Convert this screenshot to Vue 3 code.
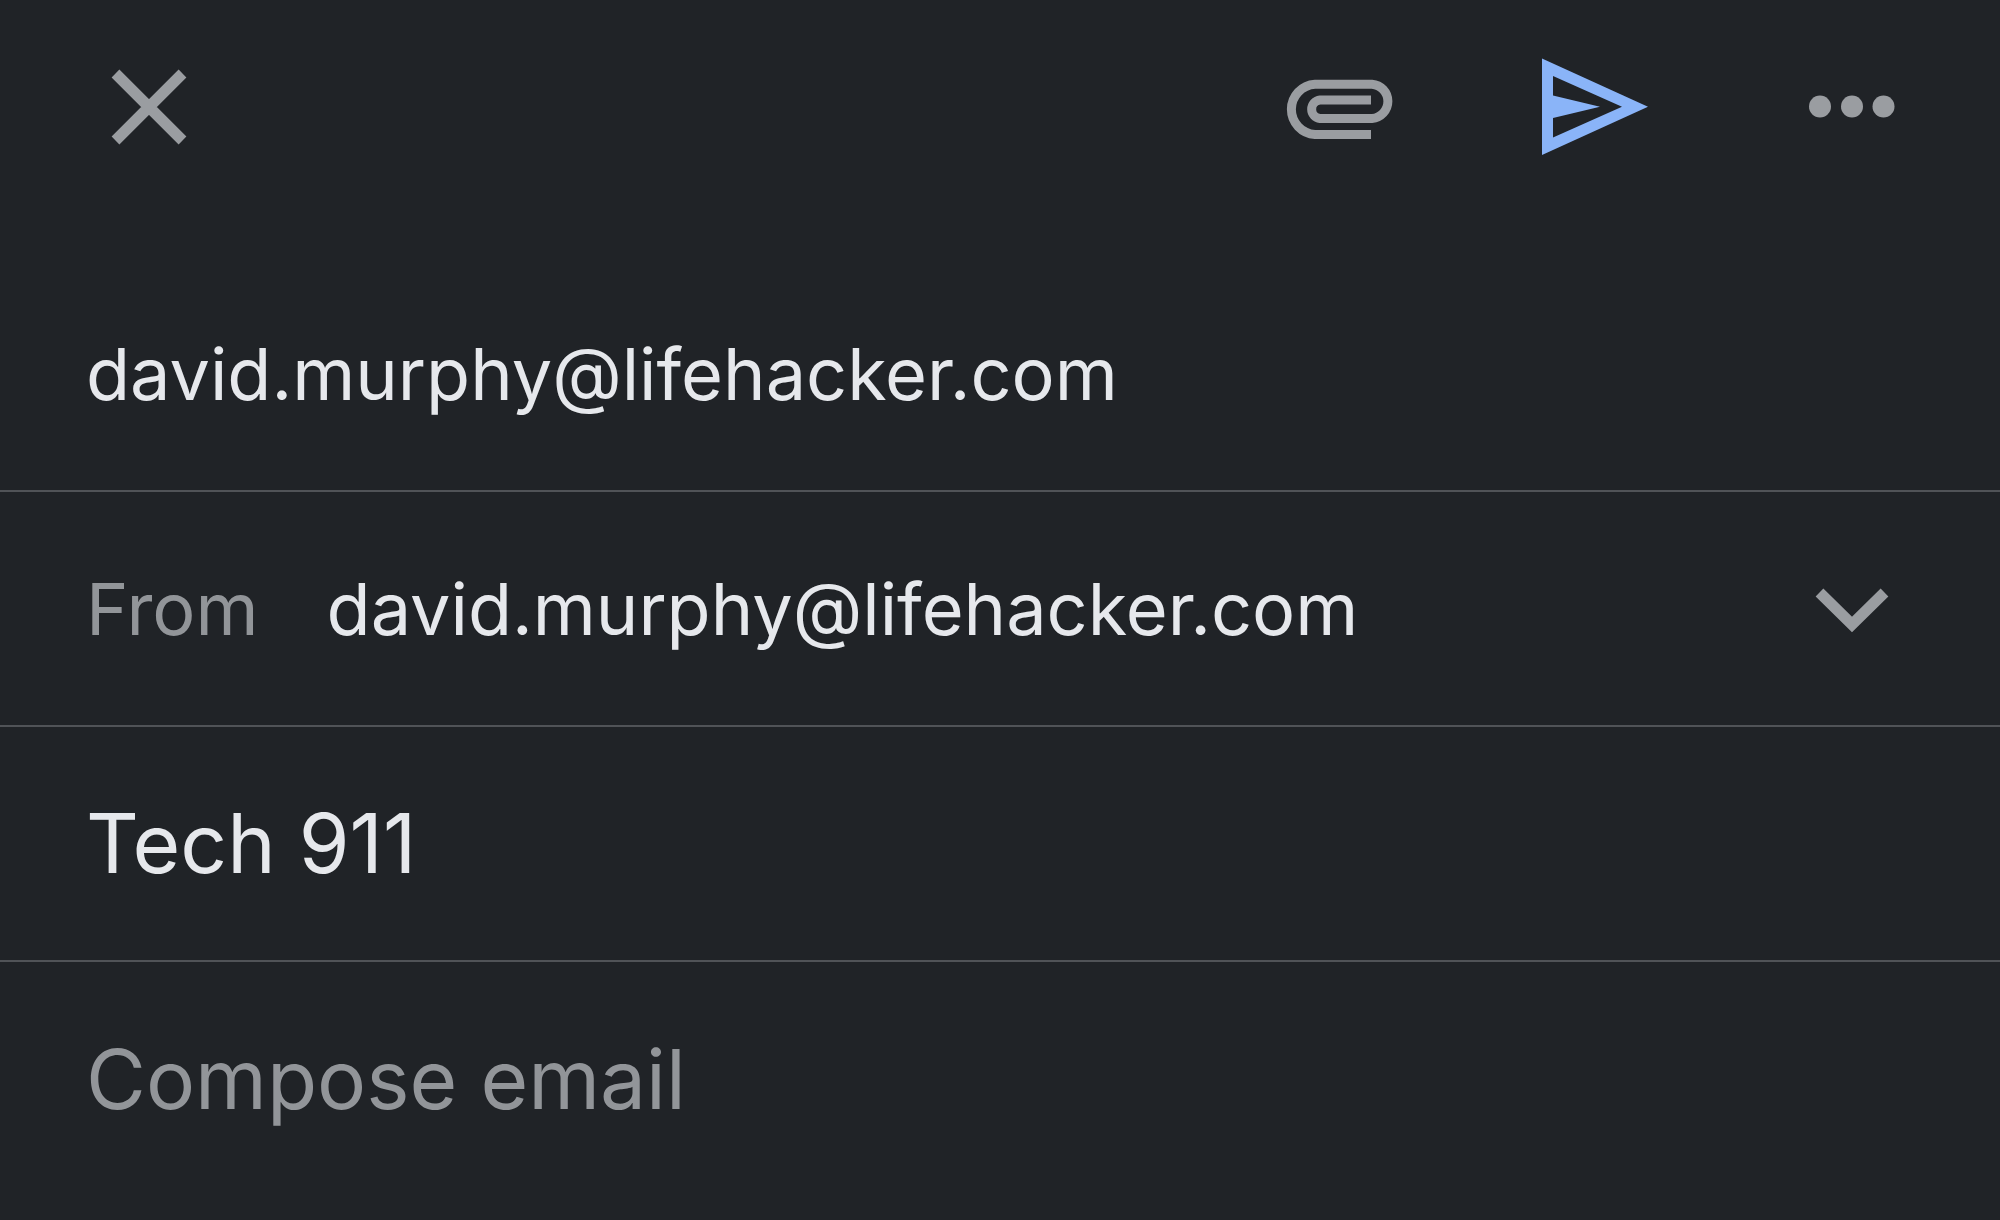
<template>
  <form class="compose" @submit.prevent>
    <header class="toolbar">
      <button type="button" class="icon-button" aria-label="Close">
        <svg viewBox="0 0 128 128" class="icon stroke">
          <path d="M30.5 30.5L97.5 97.5M97.5 30.5L30.5 97.5" />
        </svg>
      </button>
      <div class="actions">
        <button type="button" class="icon-button" aria-label="Attach file">
          <svg viewBox="0 0 128 128" class="icon stroke clip">
            <path
              d="M95 91.5H39A25.2 25.2 0 0 1 39 41.2H96A17.2 17.2 0 0 1 96 75.5H44A9.3 9.3 0 0 1 44 57H95"
            />
          </svg>
        </button>
        <button type="submit" class="icon-button send" aria-label="Send">
          <svg viewBox="0 0 128 128" class="icon">
            <path
              fill-rule="evenodd"
              d="M10 15.5L116 63.8L10 112ZM21 33V52.5L68 63.8L21 75V94.5L90 63.8Z"
            />
          </svg>
        </button>
        <button type="button" class="icon-button" aria-label="More options">
          <svg viewBox="0 0 128 128" class="icon">
            <circle cx="32" cy="63.5" r="11" />
            <circle cx="64" cy="63.5" r="11" />
            <circle cx="95.5" cy="63.5" r="11" />
          </svg>
        </button>
      </div>
    </header>

    <div class="row">
      <input v-model="to" type="email" class="field" aria-label="To" />
    </div>

    <div class="row from">
      <label for="from">From</label>
      <select id="from" v-model="from" class="field">
        <option v-for="account in accounts" :key="account" :value="account">{{ account }}</option>
      </select>
      <svg viewBox="0 0 128 128" class="icon stroke chevron" aria-hidden="true">
        <path d="M31.5 47.5L64 79.5L96.5 47.5" />
      </svg>
    </div>

    <div class="row">
      <input v-model="subject" type="text" class="field large" aria-label="Subject" />
    </div>

    <textarea v-model="body" class="field large body" placeholder="Compose email" aria-label="Message"></textarea>
  </form>
</template>

<script setup>
import { ref } from 'vue';

const accounts = ['david.murphy@lifehacker.com'];

const to = ref('david.murphy@lifehacker.com');
const from = ref(accounts[0]);
const subject = ref('Tech 911');
const body = ref('');
</script>

<style>
body {
  margin: 0;
  background: #202327;
}
</style>

<style scoped>
.compose {
  display: flex;
  flex-direction: column;
  box-sizing: border-box;
  min-height: 100vh;
  background: #202327;
  border-bottom: 1px solid #211a20;
  color: #e6e8ec;
  font-family: Inter, "Liberation Sans", sans-serif;
  font-size: 72px;
}

/* Toolbar */
.toolbar {
  display: flex;
  justify-content: space-between;
  padding: 43px 84px 86px 85px;
}

.actions {
  display: flex;
  gap: 128px;
}

.icon-button {
  display: block;
  padding: 0;
  border: none;
  background: none;
  color: #9a9da1;
  cursor: pointer;
}

.icon-button.send {
  color: #8ab4f8;
}

.icon {
  display: block;
  width: 128px;
  height: 128px;
  fill: currentColor;
}

.icon.stroke {
  fill: none;
  stroke: currentColor;
  stroke-width: 11;
}

.icon.clip {
  stroke-width: 9;
}

/* Fields */
.row {
  display: flex;
  align-items: center;
  box-sizing: border-box;
  height: 235px;
  padding: 0 84px 0 86px;
  border-bottom: 2px solid #505357;
}

.field {
  flex: 1;
  min-width: 0;
  margin: 0;
  padding: 0;
  border: none;
  outline: none;
  background: transparent;
  color: inherit;
  font-family: inherit;
  font-size: 72px;
  line-height: 96px;
  appearance: none;
}

.field.large {
  font-size: 82px;
}

.from {
  gap: 68px;
}

.from label {
  color: #929599;
}

.chevron {
  color: #9a9da1;
  pointer-events: none;
}

.body {
  padding: 70px 84px 0 86px;
  resize: none;
}

.body::placeholder {
  color: #929599;
  opacity: 1;
}
</style>
